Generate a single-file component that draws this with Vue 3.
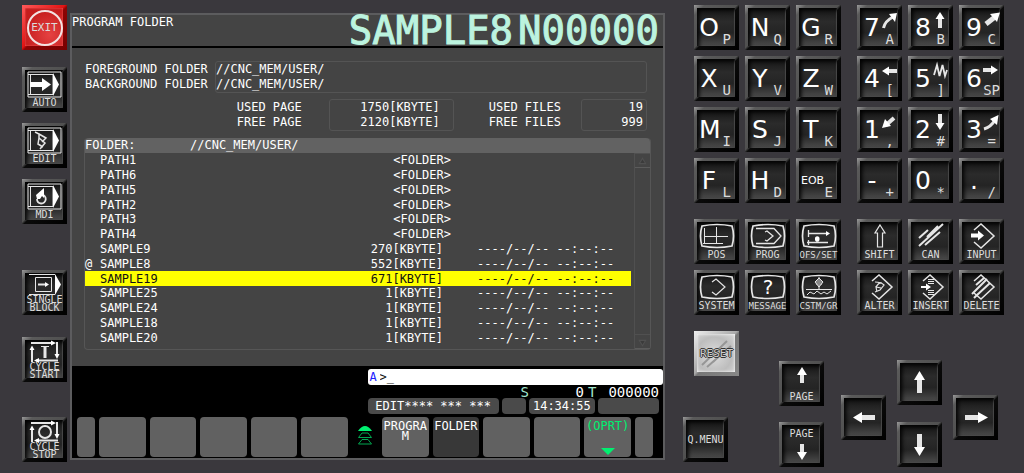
<script setup>
import { ref } from 'vue'

const command = ref('>_')

const line = (d, w = 1) => ({ d, w })
const solid = (d) => ({ d, fill: true })

const modeFrame = [
  line('M6 5H39V30H6Z'),
  line('M6 7.5H31M6 27.5H31M8.500 7V28M31 7V28'),
  solid('M31 6L37 17.500L31 29Z'),
]
const crt = line('M8 7Q23 4 38 7Q41 17 38 27Q23 30 8 27Q5 17 8 7Z', 1.700)
const diamond = line('M15 11L22 5L35 17L22 29L15 23', 1.500)
const cycleLoop = [
  line('M9 6H30M10 25V11M14 23.500H36M35 5V20', 2),
  solid('M29 3.500L34 6L29 8.500ZM7.500 13L10 8.500L12.500 13ZM17 21L12 23.500L17 26ZM32.500 17L35 22L37.500 17Z'),
]

const icons = {
  auto: [...modeFrame, solid('M8 15H20V11L29 17.500L20 24V20H8Z')],
  edit: [...modeFrame, line('M13 9L17 11V15L23 20L18 26M17 11L24 15L20 19M17 15L16 21L21 24', 1.500)],
  mdi: [...modeFrame, line('M19.500 15.500A4.500 4.500 0 1 1 19 24.500A4.500 4.500 0 0 1 15 20', 1.800), solid('M15 20L14 16L22 9V19L20 17L18 20Z')],
  single: [
    line('M7 4.500H33M7 24.500H33M13.500 7.500H29.500V21.500H13.500Z'),
    line('M16 14.500H25', 2), solid('M23 12L27 14.500L23 17ZM33 4L39 14.500L33 25Z'),
  ],
  start: [...cycleLoop, line('M23 9V21', 3), line('M19 9.500H27', 1)],
  stop: [...cycleLoop, line('M29 15A6 6 0 1 1 17 15A6 6 0 1 1 29 15', 2)],
  pos: [crt, line('M10.500 9V25M9 24.500H29M22.500 8V25M11 17.500H34')],
  prog: [crt, line('M11 9.500H29L36 17L29 24.500H11M20 13L22 12L28 17L22 22L20 21', 1.300)],
  offset: [crt, line('M12 14.500H32M12.500 11V18M12.500 21V26M11 23.500H32', 1.300), solid('M30 12L34 14.500L30 17ZM23.500 20A2.300 2.300 0 1 1 19 20A2.300 2.300 0 1 1 23.500 20')],
  system: [crt, line('M18 12L22 9L31 17L22 25L18 22', 1.200)],
  message: [crt],
  custom: [crt, line('M19 12L23 8L27 12L23 17ZM21 10V15M25 10V15M23 7V19M10 19.500H36M11 25L14 22L18 24L21 21L25 24L28 22L31 24L35 21')],
  shift: [line('M23 6L28 14H25.500V28H20.500V14H18Z', 1.200)],
  can: [line('M11 27L35 5M19 18L30 7M11 19L20 11M17 26L32 13', 2)],
  input: [diamond, solid('M12 14.500H19V11.500L25 16.500L19 21.500V18.500H12Z')],
  alter: [diamond, line('M18 12Q24 12 27 15L23 20L18 22M19 17Q22 12 25 13M20 22L19 17L24 18', 1.200)],
  insert: [diamond, line('M20 9.500H26M20 11.500H26M20 13.500H26M20 20.500H26M20 22.500H26M20 24.500H26'), solid('M13 16H18V13.500L23 17L18 20.500V18H13Z')],
  delete: [diamond, line('M13 24L28 9M17 26L31 13M17 15L25 8M15 28L19 24', 2)],
  curve7: [line('M26.500 23Q28 16 36 12', 3), solid('M32 9L40 8L38 17Z')],
  up8: [line('M32 23V12', 4), solid('M27.500 14L32 7L36.500 14Z')],
  diag9: [line('M27 19L36 12', 5), solid('M31 9L41 7.500L38 17Z')],
  left4: [line('M40 15H30', 4), solid('M32 10.500L25 15L32 19.500Z')],
  zig5: [line('M26 19L29 9L31.500 20L34.500 9L37 20L39 14', 1.800)],
  right6: [line('M24 14H34', 4), solid('M32 9.500L39 14L32 18.500Z')],
  diag1: [line('M37 11L29 18', 4), solid('M28 12L25 21L34 19Z')],
  down2: [line('M32 7V18', 4), solid('M27.500 16L32 23L36.500 16Z')],
  curve3: [line('M25 22Q32 20 36 13', 3), solid('M31 12L39.500 8L38 18Z')],
  pageUp: [line('M23 22V12', 4), solid('M18 14L23 6L28 14Z')],
  pageDown: [line('M23 22V32', 4), solid('M18 30L23 38L28 30Z')],
  up: [line('M22.500 33V19', 5), solid('M17 20L22.500 11L28 20Z')],
  down: [line('M22.500 12V26', 5), solid('M17 25L22.500 34L28 25Z')],
  left: [line('M34 22.500H20', 5), solid('M21 17L12 22.500L21 28Z')],
  right: [line('M12 22.500H26', 5), solid('M25 17L35 22.500L25 28Z')],
  reset: [line('M8 34L33 10M13 36L37 15M19 31L33 18', 2)],
}

const modeGroups = [
  [{ label: 'EXIT', kind: 'exit' }],
  [{ label: 'AUTO', icon: 'auto' }, { label: 'EDIT', icon: 'edit' }, { label: 'MDI', icon: 'mdi' }],
  [{ label: 'SINGLE BLOCK', icon: 'single', kind: 'double' }],
  [{ label: 'CYCLE START', icon: 'start', kind: 'double' }],
  [{ label: 'CYCLE STOP', icon: 'stop', kind: 'double' }],
]
const k = (main, sub, icon) => ({ main, sub, icon })
const f = (label, icon, kind) => ({ label, icon, kind })
const pads = [
  [k('O', 'P'), k('N', 'Q'), k('G', 'R'), k('X', 'U'), k('Y', 'V'), k('Z', 'W'), k('M', 'I'), k('S', 'J'), k('T', 'K'), k('F', 'L'), k('H', 'D'), k('EOB', 'E')],
  [k('7', 'A', 'curve7'), k('8', 'B', 'up8'), k('9', 'C', 'diag9'), k('4', '[', 'left4'), k('5', ']', 'zig5'), k('6', 'SP', 'right6'), k('1', ',', 'diag1'), k('2', '#', 'down2'), k('3', '=', 'curve3'), k('-', '+'), k('0', '*'), k('.', '/')],
  [f('POS', 'pos'), f('PROG', 'prog'), f('OFS/SET', 'offset', 'tight'), f('SYSTEM', 'system'), f('MESSAGE', 'message', 'tight'), f('CSTM/GR', 'custom', 'tight')],
  [f('SHIFT', 'shift'), f('CAN', 'can'), f('INPUT', 'input'), f('ALTER', 'alter'), f('INSERT', 'insert'), f('DELETE', 'delete')],
]
const navGroups = [
  { name: 'control', keys: [f('RESET', 'reset', 'reset'), f('Q.MENU', null, 'middle')] },
  { name: 'page', keys: [f('PAGE', 'pageUp'), f('PAGE', 'pageDown', 'top')] },
  { name: 'side', keys: [{ icon: 'left', aria: 'Left' }] },
  { name: 'vertical', keys: [{ icon: 'up', aria: 'Up' }, { icon: 'down', aria: 'Down' }] },
  { name: 'side', keys: [{ icon: 'right', aria: 'Right' }] },
]

const stamp = '----/--/-- --:--:--'
const folders = ['PATH1', 'PATH6', 'PATH5', 'PATH2', 'PATH3', 'PATH4'].map((name) => ({ name, size: '<FOLDER>', folder: true }))
const files = [['SAMPLE9', 270], ['SAMPLE8', 552], ['SAMPLE19', 671], ['SAMPLE25', 1], ['SAMPLE24', 1], ['SAMPLE18', 1], ['SAMPLE20', 1]]
  .map(([name, kb]) => ({ name, size: `${kb}[KBYTE]`, date: stamp, mark: name === 'SAMPLE8' ? '@' : '', selected: name === 'SAMPLE19' }))
const rows = [...folders, ...files]

const softLeft = ['', '', '', '', '']
const softRight = [{ text: 'PROGRAM' }, { text: 'FOLDER', dark: true }, { text: '' }, { text: '' }, { text: '(OPRT)', menu: true }]
</script>

<template>
  <main class="machine">
    <nav class="modes" aria-label="Operation mode">
      <div v-for="(group, g) in modeGroups" :key="g" class="mode-group">
        <button v-for="key in group" :key="key.label" type="button" class="key" :class="key.kind">
          <svg v-if="key.icon" viewBox="0 0 45 45" aria-hidden="true">
            <path v-for="(p, i) in icons[key.icon]" :key="i" :d="p.d" :class="p.fill ? 'solid' : 'line'" :stroke-width="p.w" />
          </svg>
          <span class="label">{{ key.label }}</span>
        </button>
      </div>
    </nav>

    <section class="screen">
      <div class="program">
        <header class="heading">
          <h1>PROGRAM FOLDER</h1>
          <p class="current"><span>SAMPLE8</span><span>N00000</span></p>
        </header>
        <div class="content">
          <div class="paths">
            <p class="names"><span>FOREGROUND FOLDER</span><span>BACKGROUND FOLDER</span></p>
            <p class="box"><span>//CNC_MEM/USER/</span><span>//CNC_MEM/USER/</span></p>
          </div>
          <div class="usage">
            <p class="names"><span>USED PAGE</span><span>FREE PAGE</span></p>
            <p class="box pages"><span>1750[KBYTE]</span><span>2120[KBYTE]</span></p>
            <p class="names"><span>USED FILES</span><span>FREE FILES</span></p>
            <p class="box files"><span>19</span><span>999</span></p>
          </div>
          <div class="listing">
            <div class="list-head"><span>FOLDER:</span><span>//CNC_MEM/USER/</span></div>
            <div class="list-body">
              <table>
                <tbody>
                  <tr v-for="row in rows" :key="row.name" :class="{ selected: row.selected }">
                    <td class="mark">{{ row.mark }}</td>
                    <td>{{ row.name }}</td>
                    <td class="size" :class="{ folder: row.folder }">{{ row.size }}</td>
                    <td class="date">{{ row.date }}</td>
                  </tr>
                </tbody>
              </table>
              <div class="scrollbar">
                <button type="button" aria-label="Scroll up"><svg viewBox="0 0 14 14"><path d="M4 9L7 4L10 9Z" /></svg></button>
                <button type="button" aria-label="Scroll down"><svg viewBox="0 0 14 14"><path d="M4 5L7 10L10 5Z" /></svg></button>
              </div>
            </div>
          </div>
        </div>
      </div>

      <div class="console">
        <div class="status">
          <div class="entry">
            <label for="command">A</label>
            <input id="command" v-model="command" type="text" spellcheck="false" autocomplete="off">
          </div>
          <p class="speed"><span class="tag">S</span><span class="spindle">0</span><span class="tag">T</span><span class="tool">000000</span></p>
          <p class="state"><span class="edit">EDIT**** *** ***</span><span class="alarm"></span><span class="clock">14:34:55</span><span class="rest"></span></p>
        </div>
        <div class="softkeys">
          <button type="button" class="soft narrow" aria-label="Previous menu"></button>
          <button v-for="(s, i) in softLeft" :key="i" type="button" class="soft" :aria-label="`Soft key ${i + 1}`"></button>
          <svg class="level" viewBox="0 0 26 40" aria-hidden="true">
            <path class="on" d="M6 14Q13 4 20 14Z" />
            <path class="off" d="M10 16H16L19.500 20.500H6.500ZM10 22.500H16L19.500 27H6.500Z" />
          </svg>
          <button v-for="(s, i) in softRight" :key="i" type="button" class="soft" :class="{ dark: s.dark, menu: s.menu }" :aria-label="s.text || `Soft key ${i + 6}`">
            <span>{{ s.text }}</span>
            <svg v-if="s.menu" viewBox="0 0 14 7" aria-hidden="true"><path d="M0 0H14L7 7Z" /></svg>
          </button>
          <button type="button" class="soft narrow" aria-label="Next menu"></button>
        </div>
      </div>
    </section>

    <section class="keyboard">
      <div class="pads">
        <div v-for="(pad, n) in pads" :key="n" class="pad">
          <button v-for="key in pad" :key="key.main || key.label" type="button" class="key" :class="key.kind">
            <svg v-if="key.icon" viewBox="0 0 45 45" aria-hidden="true">
              <path v-for="(p, i) in icons[key.icon]" :key="i" :d="p.d" :class="p.fill ? 'solid' : 'line'" :stroke-width="p.w" />
              <text v-if="key.icon === 'message'" x="23" y="24" text-anchor="middle">?</text>
            </svg>
            <span v-if="key.main" class="main" :class="{ word: key.main.length > 1 }">{{ key.main }}</span>
            <span v-if="key.sub" class="sub" :class="{ wide: key.sub.length > 1 }">{{ key.sub }}</span>
            <span v-if="key.label" class="label">{{ key.label }}</span>
          </button>
        </div>
      </div>
      <div class="navigation">
        <div v-for="(group, n) in navGroups" :key="n" class="nav-group" :class="group.name">
          <button v-for="(key, j) in group.keys" :key="j" type="button" class="key" :class="key.kind" :aria-label="key.aria">
            <svg v-if="key.icon" viewBox="0 0 45 45" aria-hidden="true">
              <path v-for="(p, i) in icons[key.icon]" :key="i" :d="p.d" :class="p.fill ? 'solid' : 'line'" :stroke-width="p.w" />
            </svg>
            <span v-if="key.label" class="label">{{ key.label }}</span>
          </button>
        </div>
      </div>
    </section>
  </main>
</template>

<style>
body {
  margin: 0;
  background: #3a383d;
}
</style>

<style scoped>
.machine {
  display: flex;
  align-items: flex-start;
  box-sizing: border-box;
  min-height: 100vh;
  background: #3a383d;
  color: #fff;
  font: 12px/15px "DejaVu Sans Mono", "Liberation Mono", monospace;
}
p, h1 { margin: 0; font: inherit; }
button, input { font: inherit; color: inherit; }
span { white-space: pre; }

/* hardware keys */
.key {
  position: relative;
  display: grid;
  flex: none;
  width: 45px;
  height: 45px;
  padding: 0;
  border: 0;
  background: #000;
  color: #dcdcdc;
  isolation: isolate;
}
.key::before {
  content: "";
  position: absolute;
  inset: 0;
  z-index: -1;
  border: solid transparent;
  border-width: 3px 4px 4px 3px;
  background:
    linear-gradient(#151515, #2b2b2b 35%, #242424 65%, #4b4b4b) padding-box,
    linear-gradient(135deg, #9a9a9a, #5a5a5a 12%, #505050 48%, #0a0a0a 52%, #000) border-box;
  box-shadow: inset 2px 2px 4px #000, inset -1px -1px 1px #555;
}
.key svg {
  position: absolute;
  inset: 0;
}
.key .line { fill: none; stroke: #e6e6e6; }
.key .solid { fill: #fff; }
.key text {
  fill: #fff;
  font: 20px "DejaVu Sans", sans-serif;
}
.key > span { grid-area: 1 / 1; position: relative; }
.label {
  place-self: end center;
  margin-bottom: 4px;
  font-size: 10px;
  line-height: 10px;
}
.tight .label { font-size: 9px; }
.double .label {
  width: 38px;
  margin-bottom: 3px;
  line-height: 8px;
  text-align: center;
  white-space: normal;
}
.middle .label { align-self: center; margin: 0; }
.top .label { align-self: start; margin: 7px 0 0; }
.main {
  place-self: start;
  min-width: 20px;
  margin: 10px 0 0 5px;
  color: #fff;
  font: 25px/25px "DejaVu Sans", sans-serif;
  text-align: center;
}
.main.word {
  margin-top: 17px;
  font-size: 11px;
  line-height: 11px;
}
.sub {
  place-self: end;
  margin: 0 8px 4px 0;
  font-size: 14px;
  line-height: 14px;
}
.sub.wide { margin-right: 4px; }
.exit::before {
  background:
    radial-gradient(circle at 65% 70%, #e54242, #c51d1d 70%) padding-box,
    linear-gradient(135deg, #ff5a5a, #e01414 48%, #8c0404 52%, #700) border-box;
  box-shadow: inset 0 0 2px #ff6a6a;
}
.exit .label {
  box-sizing: border-box;
  place-self: center;
  display: grid;
  place-content: center;
  width: 36px;
  height: 36px;
  margin: 0;
  border: 2px solid #f3e2e2;
  border-radius: 50%;
  font-size: 11px;
}
.reset::before {
  background:
    radial-gradient(circle at 45% 55%, #ddd, #bdbdbd 60%, #d9d9d9) padding-box,
    linear-gradient(135deg, #eee, #aaa 48%, #777 52%, #888) border-box;
  box-shadow: inset 0 0 3px #fff;
}
.reset .line { stroke: #969696; }
.reset .label {
  place-self: center;
  margin: 0;
  color: #ccc;
  font-size: 11px;
  text-shadow: 1px 0 #333, -1px 0 #333, 0 1px #333, 0 -1px #333;
}

/* mode column */
.modes {
  display: flex;
  flex-direction: column;
  flex: none;
  padding: 5px 3px 11px 22px;
}
.mode-group { display: grid; gap: 11px; }
.mode-group:nth-child(2) { margin-top: 17px; }
.mode-group:nth-child(3) { margin-top: 46px; }
.mode-group:nth-child(4) { margin-top: 22px; }
.mode-group:nth-child(5) { margin-top: 35px; }

/* display */
.screen {
  flex: 1;
  min-width: 0;
  margin-top: 13px;
  border: 2px solid #5c5c5e;
  background: #000;
}
.program {
  background: #444;
  padding-bottom: 16px;
}
.heading {
  display: flex;
  justify-content: space-between;
  height: 31px;
  border-bottom: 2px solid #000;
}
.current {
  display: flex;
  gap: 5px;
  margin-right: 4px;
  color: #bcf3df;
  font-size: 39px;
  line-height: 31px;
  -webkit-text-stroke: 1px #bcf3df;
}
.content { padding: 13px 12px 0 13px; }
.names, .box { display: grid; align-content: center; }
.box {
  box-sizing: border-box;
  height: 32px;
  border: 1px solid #545454;
  border-radius: 3px;
}
.paths { display: flex; margin-right: 4px; }
.paths .names { width: 130px; }
.paths .box { flex: 1; }
.usage {
  display: flex;
  justify-content: flex-end;
  margin: 6px 4px 0 0;
}
.usage .box { text-align: right; }
.pages { width: 125px; padding-right: 13px; margin: 0 35px 0 27px; }
.files { width: 66px; padding-right: 3px; margin-left: 20px; }
.listing {
  margin: 7px 0 0 -1px;
  border: solid #565656;
  border-width: 0 1px 1px;
  border-radius: 4px;
}
.list-head {
  display: flex;
  background: #626262;
  border-radius: 4px 4px 0 0;
}
.list-head span:first-child { width: 105px; }
.list-body { display: flex; gap: 3px; }
table {
  flex: 1;
  height: 192px;
  margin-bottom: 4px;
  border-collapse: collapse;
  table-layout: fixed;
}
td { padding: 0; line-height: 14px; white-space: pre; }
.mark { width: 15px; }
.size { width: 120px; padding-right: 8px; text-align: right; }
.size.folder { padding-right: 0; }
.date { width: 180px; padding-left: 26px; }
.size, .date { box-sizing: border-box; }
.selected { background: #ff0; color: #111; }
.scrollbar {
  display: flex;
  flex-direction: column;
  justify-content: space-between;
  border-left: 1px solid #505050;
}
.scrollbar button {
  display: block;
  width: 15px;
  height: 15px;
  padding: 0;
  border: 0;
  border-bottom: 1px solid #5c5c5c;
  border-top: 1px solid #505050;
  background: #444;
}
.scrollbar svg { display: block; fill: #3b3b3b; stroke: #505050; }

/* status and soft keys */
.console { padding: 3px 0 1px; }
.status { width: 50%; margin-left: auto; }
.entry {
  display: flex;
  height: 16px;
  padding-left: 2px;
  border-radius: 3px;
  background: #fff;
}
.entry label { width: 10px; color: #1d1dff; line-height: 16px; }
.entry input {
  flex: 1;
  min-width: 0;
  height: 16px;
  padding: 0;
  border: 0;
  background: none;
  color: #111;
  line-height: 16px;
  outline: 0;
}
.speed {
  display: flex;
  justify-content: flex-end;
  height: 13px;
  padding-right: 4px;
  font-size: 14px;
  line-height: 14px;
}
.tag { color: #a3e8d0; }
.spindle { width: 55px; margin-right: 4px; text-align: right; }
.tool { margin-left: 12px; }
.state {
  display: flex;
  gap: 3px;
  padding-right: 4px;
}
.state span {
  height: 16px;
  border-radius: 4px;
  background: #4a4a4a;
  line-height: 16px;
  text-align: center;
}
.edit { flex: 131; }
.alarm { flex: 24; }
.clock { flex: 66; }
.rest { flex: 61; }
.softkeys {
  display: flex;
  gap: 4px;
  height: 40px;
  margin-top: 3px;
  padding: 0 10px 0 5px;
}
.soft {
  flex: 1 1 0;
  min-width: 0;
  display: flex;
  flex-direction: column;
  align-items: center;
  justify-content: space-between;
  padding: 4px 0 2px;
  border: 0;
  border-radius: 4px;
  background: #616161;
}
.soft span {
  max-width: 100%;
  line-height: 10px;
  white-space: normal;
  word-break: break-all;
}
.soft svg { width: 14px; height: 7px; fill: #00f070; }
.narrow { flex: 0 0 18px; }
.dark { background: #383838; }
.menu { color: #00f070; }
.level { flex: none; width: 26px; }
.on { fill: #00f070; }
.off { fill: none; stroke: #00a850; }

/* keyboard */
.keyboard {
  flex: none;
  padding: 5px 20px 6px 18px;
}
.pads {
  display: grid;
  grid-template-columns: auto auto;
  gap: 16px;
  margin-left: 11px;
}
.pad {
  display: grid;
  grid-template-columns: repeat(3, 45px);
  gap: 6px;
}
.navigation { display: flex; margin-top: 16px; }
.nav-group {
  display: flex;
  flex-direction: column;
  gap: 17px;
}
.control { gap: 41px; padding-right: 40px; }
.control .reset { margin-left: 11px; }
.page { padding: 30px 17px 0 0; gap: 16px; }
.vertical { padding: 29px 11px 0; }
.side { padding-top: 64px; }
</style>
